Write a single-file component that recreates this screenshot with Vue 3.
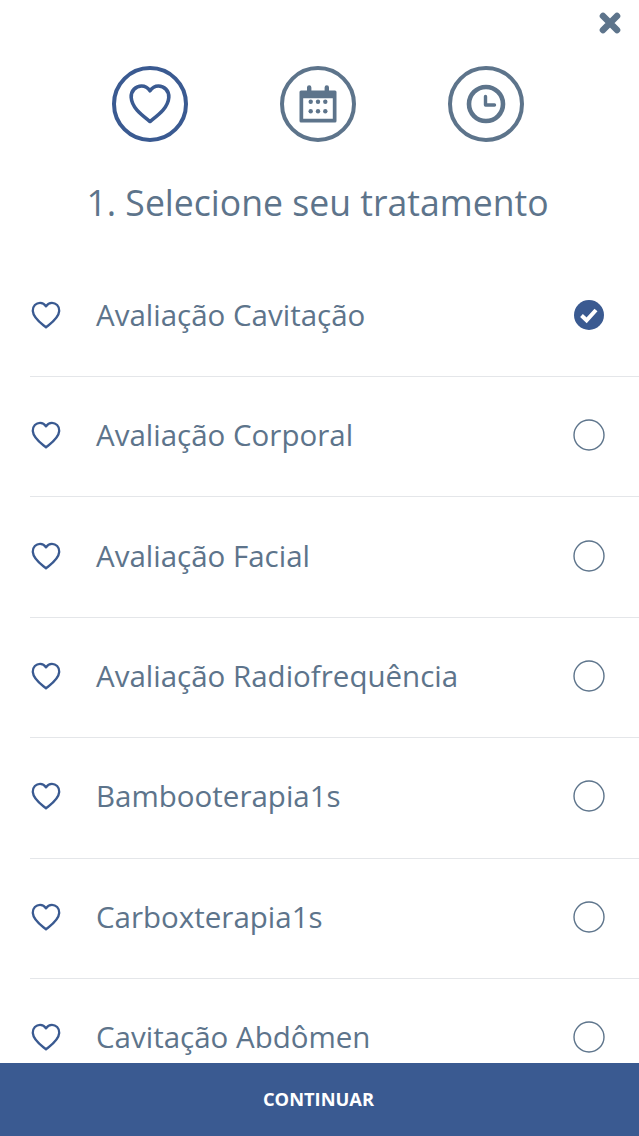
<script setup>
const treatments = [
  "Avaliação Cavitação",
  "Avaliação Corporal",
  "Avaliação Facial",
  "Avaliação Radiofrequência",
  "Bambooterapia1s",
  "Carboxterapia1s",
  "Cavitação Abdômen",
];
const selected = 0;
</script>

<template>
  <div class="page">
    <div class="top">
      <svg class="close" width="24" height="24" viewBox="0 0 24 24">
        <path d="M5 5 L19 19 M19 5 L5 19" stroke="#5d748b" stroke-width="6.6" stroke-linecap="round" fill="none" />
      </svg>
    </div>

    <div class="steps">
      <div class="step active">
        <svg width="44" height="44" viewBox="0 0 44 44" fill="none">
          <path d="M22 39.5 C16 34.5 4 27 3.2 15.5 C2.8 8.5 8 4 13.5 4 C17 4 20 5.8 22 8.8 C24 5.8 27 4 30.5 4 C36 4 41.2 8.5 40.8 15.5 C40 27 28 34.5 22 39.5 Z" stroke="#3a5a91" stroke-width="3.6" stroke-linejoin="round" />
        </svg>
      </div>
      <div class="step">
        <svg width="40" height="40" viewBox="0 0 40 40">
          <path fill="#5d748b" d="M3 6.5 H9 V3.5 a2.2 2.2 0 0 1 4.4 0 V6.5 H26.6 V3.5 a2.2 2.2 0 0 1 4.4 0 V6.5 H37 a1.5 1.5 0 0 1 1.5 1.5 V37 a1.5 1.5 0 0 1 -1.5 1.5 H3 A1.5 1.5 0 0 1 1.5 37 V8 A1.5 1.5 0 0 1 3 6.5 Z M5.2 14.3 V34.8 H34.8 V14.3 Z" fill-rule="evenodd" />
          <circle cx="12.7" cy="17.8" r="2.2" fill="#5d748b" /><circle cx="20" cy="17.8" r="2.2" fill="#5d748b" /><circle cx="27.3" cy="17.8" r="2.2" fill="#5d748b" />
          <circle cx="12.7" cy="27.3" r="2.2" fill="#5d748b" /><circle cx="20" cy="27.3" r="2.2" fill="#5d748b" /><circle cx="27.3" cy="27.3" r="2.2" fill="#5d748b" />
        </svg>
      </div>
      <div class="step">
        <svg width="40" height="40" viewBox="0 0 40 40" fill="none" stroke="#5d748b">
          <circle cx="20" cy="20" r="17" stroke-width="4.6" />
          <path d="M19.5 12.5 V21 H28.5" stroke-width="3.4" stroke-linecap="round" stroke-linejoin="round" />
        </svg>
      </div>
    </div>

    <h1 class="title">1. Selecione seu tratamento</h1>

    <ul class="list">
      <li v-for="(item, i) in treatments" :key="item" class="row">
        <svg class="heart" width="30" height="28" viewBox="0 0 44 41" fill="none">
          <path d="M22 38.5 C16 33.5 3.4 26 2.6 14.5 C2.2 7.5 7.6 2.6 13.3 2.6 C17 2.6 20 4.6 22 7.8 C24 4.6 27 2.6 30.7 2.6 C36.4 2.6 41.8 7.5 41.4 14.5 C40.6 26 28 33.5 22 38.5 Z" stroke="#3a5a91" stroke-width="3.4" stroke-linejoin="round" />
        </svg>
        <span class="name">{{ item }}</span>
        <svg v-if="i === selected" class="radio" width="32" height="32" viewBox="0 0 32 32">
          <circle cx="16" cy="16" r="15" fill="#3a5a91" />
          <path d="M8.5 16.5 L13.6 21.3 L23 11" stroke="#fff" stroke-width="4" fill="none" />
        </svg>
        <svg v-else class="radio" width="32" height="32" viewBox="0 0 32 32">
          <circle cx="16" cy="16" r="15" fill="none" stroke="#5d748b" stroke-width="1.4" />
        </svg>
      </li>
    </ul>

    <button class="continue">CONTINUAR</button>
  </div>
</template>

<style scoped>
.page {
  position: relative;
  width: 639px;
  height: 1136px;
  overflow: hidden;
  background: #fff;
  font-family: "Open Sans", sans-serif;
  color: #5d748b;
}
.top {
  display: flex;
  justify-content: flex-end;
  height: 66px;
  padding: 11px 17px 0 0;
  box-sizing: border-box;
}
.steps {
  display: flex;
  justify-content: center;
  gap: 92px;
  padding-right: 3px;
}
.step {
  width: 76px;
  height: 76px;
  box-sizing: border-box;
  border: 4px solid #5d748b;
  border-radius: 50%;
  display: flex;
  align-items: center;
  justify-content: center;
}
.step.active {
  border-color: #3a5a91;
}
.title {
  margin: 36px 0 0;
  padding-right: 4px;
  font-size: 35.6px;
  line-height: 48px;
  font-weight: 400;
  text-align: center;
}
.list {
  list-style: none;
  margin: 30.7px 0 0 30px;
  padding: 0;
}
.row {
  display: flex;
  align-items: center;
  height: 120.4px;
  padding-bottom: 3px;
  box-sizing: border-box;
  border-bottom: 1px solid #e4e6e9;
}
.heart {
  flex: none;
  margin-left: 1px;
}
.name {
  flex: 1;
  margin-left: 35px;
  font-size: 29.5px;
  line-height: 38px;
}
.radio {
  flex: none;
  margin-right: 34px;
}
.continue {
  position: absolute;
  left: 0;
  bottom: 0;
  width: 100%;
  height: 73px;
  padding: 0 2px 2px 0;
  border: 0;
  background: #3a5a91;
  color: #fff;
  font-family: inherit;
  font-size: 18.3px;
  font-weight: 700;
}
</style>
